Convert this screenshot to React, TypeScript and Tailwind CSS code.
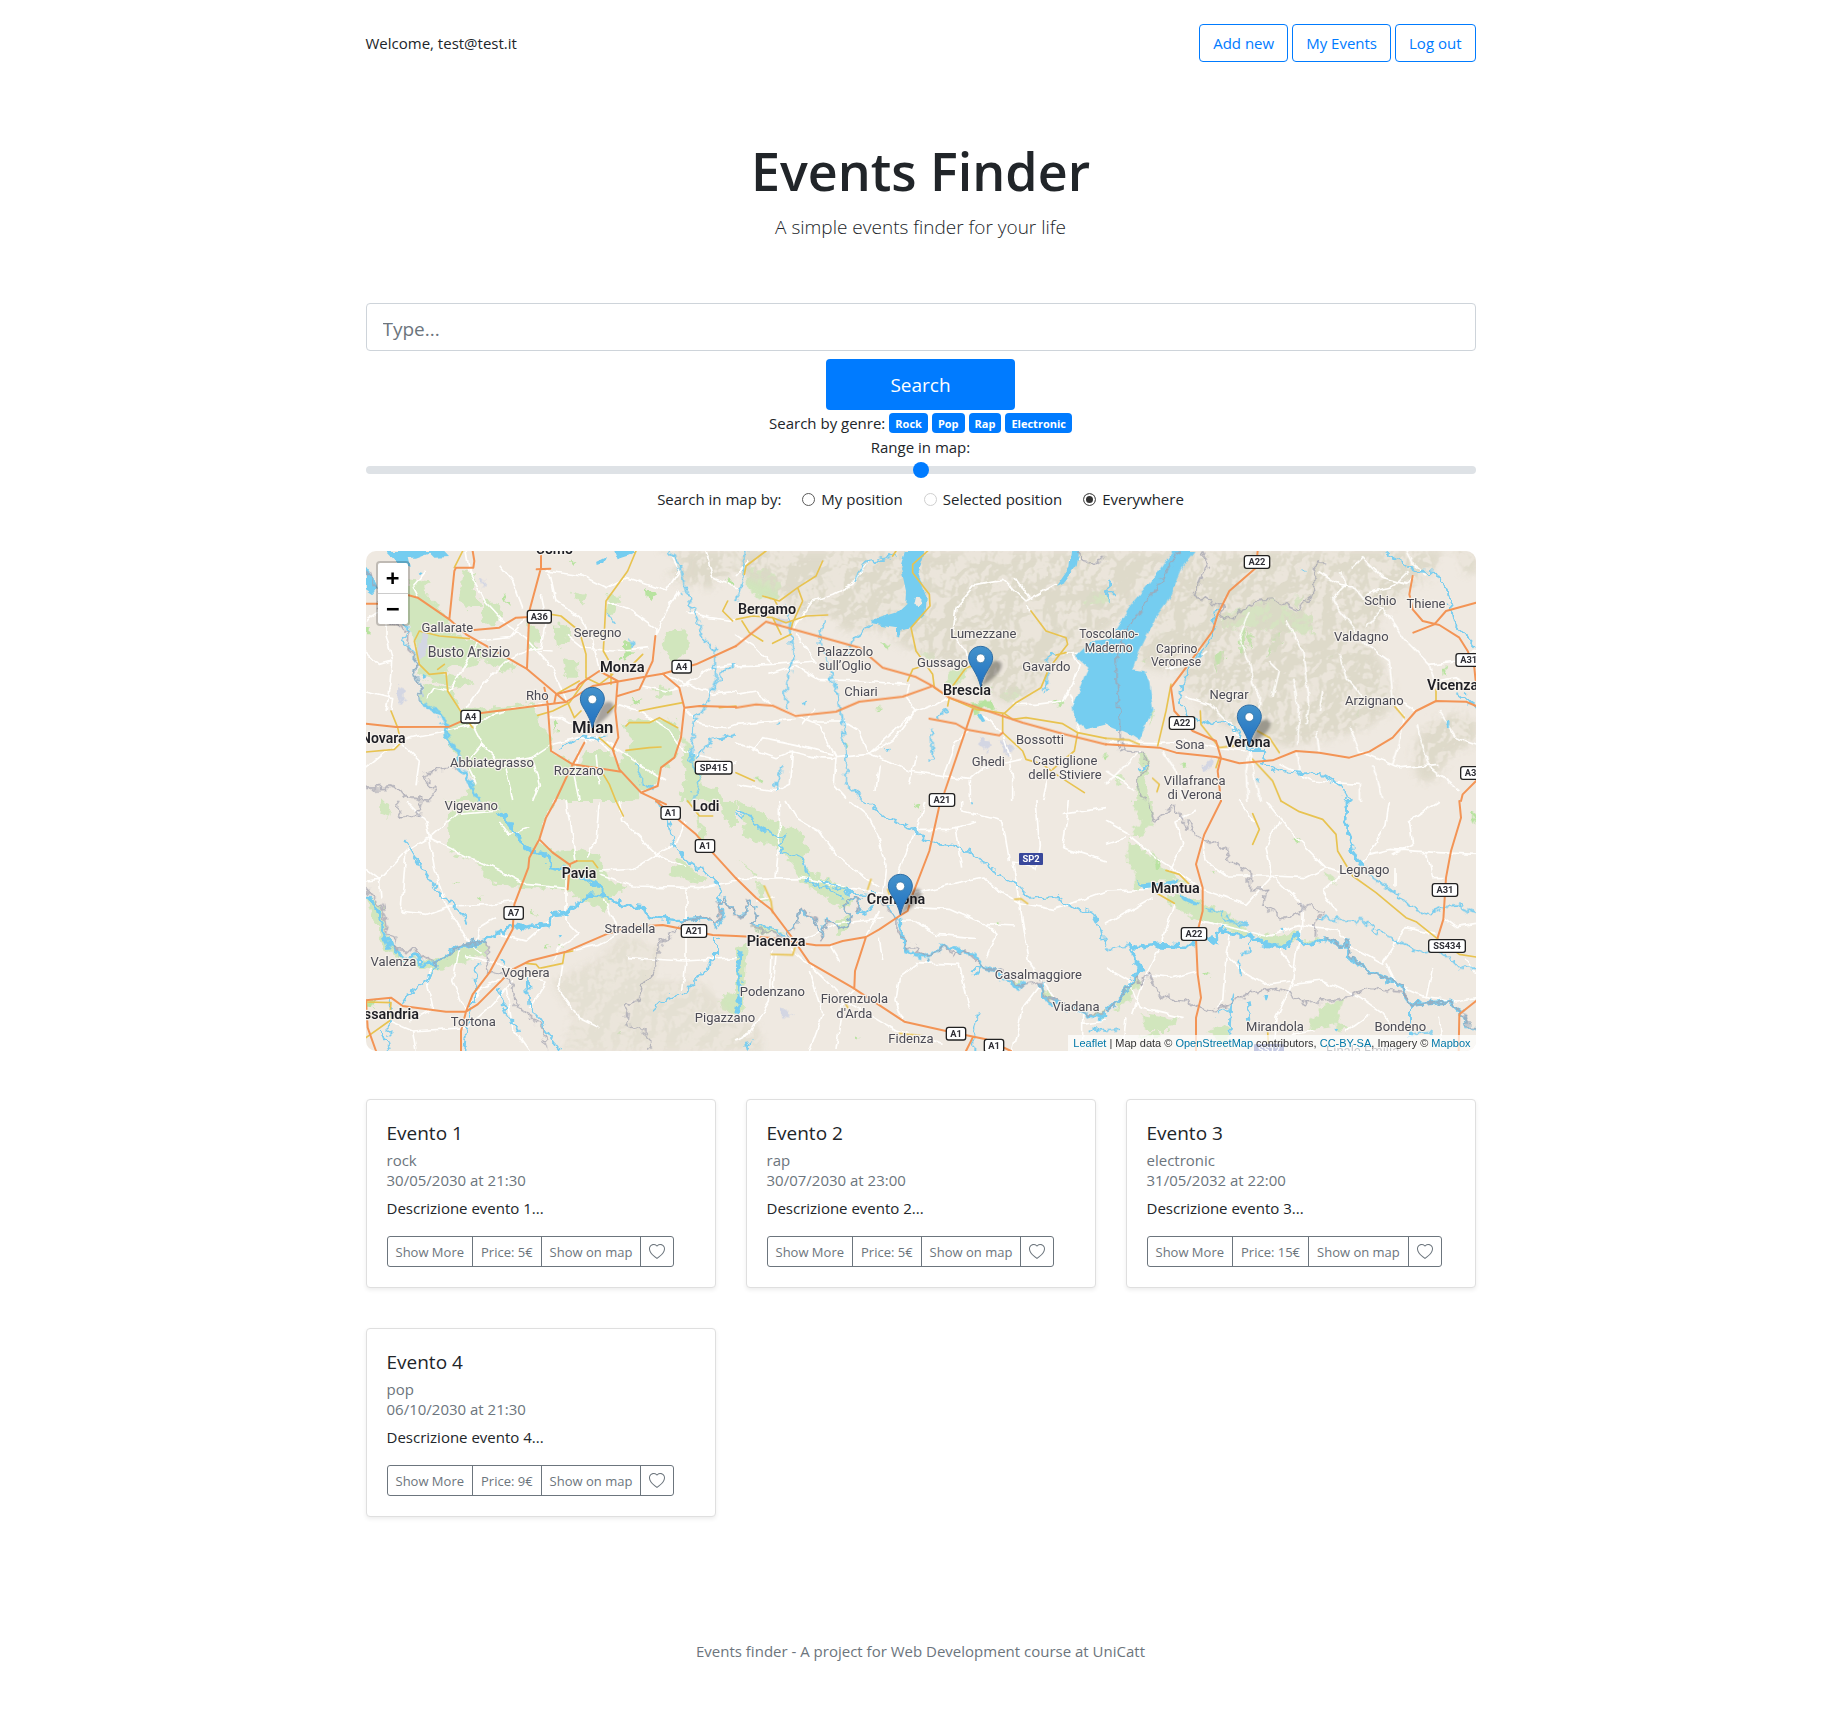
import React from "react";

type Tile = {
  x: number;
  y: number;
  green: string[];
  park: string[];
  lake: string[];
  river: string[];
  stream: string[];
  white: string[];
  yellow: string[];
  orange: string[];
  border: string[];
};

// The drawing is divided into six tiles of 1110 x 750 units, three units to a pixel.
const tiles: Tile[] = [
  {
    x: 0,
    y: 0,
    green: [
      "M125,85 L185,90 L170,120 L215,170 L250,205 L250,240 L310,270 L400,310 L460,350 L420,360 L350,330 L300,350 L250,340 L240,370 L300,380 L320,400 L260,410 L200,390 L160,370 L148,260 L112,200Z",
      "M170,400 L250,410 L290,480 L400,470 L500,455 L520,520 L560,560 L555,605 L640,640 L660,600 L730,600 L760,650 L800,560 L765,520 L790,505 L930,510 L945,560 L920,640 L880,660 L870,705 L825,725 L800,750 L230,750 L290,740 L330,690 L270,620 L240,560 L235,500 L165,460Z",
      "M290,60 L330,70 L320,110 L340,160 L300,175 L280,140Z",
      "M350,150 L400,160 L410,210 L370,230 L340,190Z",
      "M560,220 L610,225 L605,270 L570,290Z",
      "M590,320 L640,330 L635,380 L600,380Z",
      "M480,210 L520,240 L510,300 L485,290Z",
      "M900,240 L960,235 L970,290 L930,340 L890,300Z",
      "M960,560 L990,640 L1010,700 L1060,720 L1070,750 L940,750 L960,680 L945,620Z",
      "M730,120 L760,140 L740,200 L720,180Z",
      "M620,120 L660,130 L650,170Z",
      "M800,520 L830,540 L820,570 L790,560Z",
      "M860,410 L900,400 L920,430 L880,440Z",
    ],
    park: [
      "M775,270 L795,275 L798,320 L770,332Z",
      "M840,115 L870,125 L860,150 L842,140Z",
      "M410,120 L428,160 L415,150Z",
      "M610,35 L628,30 L622,45Z",
      "M560,515 L580,520 L570,540Z",
      "M800,440 L830,450 L800,460Z",
      "M0,235 L12,232 L10,250 L0,250Z",
      "M1080,85 L1100,90 L1095,105Z",
    ],
    lake: [
      "M0,50 L25,85 L35,110 L20,132 L0,118Z",
      "M60,0 L235,0 L252,18 L205,20 L190,5 L150,20 L125,20 L132,50 L100,42Z",
      "M745,0 L815,0 L785,15 L755,25Z",
      "M690,30 L720,15 L712,35 L692,42Z",
      "M155,62 L170,66 L160,75Z",
      "M168,370 L182,378 L172,384Z",
    ],
    river: ["M165,455 L225,490 L240,530 L250,570 L275,600 L280,650 L300,680 L320,715 L340,750"],
    stream: [
      "M108,215 L130,240 L100,270 L130,290 L150,310 L145,360 L160,400 L165,455",
      "M910,0 L945,50 L960,130 L985,180 L1010,260 L1045,300 L1050,380 L1030,450 L985,510 L975,620 L1000,690 L980,750",
      "M730,190 L745,215 M790,265 L800,290",
      "M580,590 L650,560 L720,560",
      "M810,640 L830,700 L860,715",
      "M985,620 L1040,570 L1110,550",
      "M1110,340 L1070,360 L1050,400",
    ],
    white: [
      "M0,210 L60,170 L60,250 L80,330 L75,400 L60,480 M0,300 L40,340 L75,330",
      "M300,0 L310,60 L355,150 L420,220 L480,260 L560,350 L600,453",
      "M525,130 L540,200 L525,290 L483,300 L420,330 L350,400 L300,470",
      "M540,60 L650,75 L720,110 L780,80 L900,120 L940,60 L920,20",
      "M550,60 L570,150 L640,200 L680,270 L700,360",
      "M720,150 L800,180 L870,230 L868,255 M868,255 L900,180 L940,120",
      "M830,405 L900,420 L970,400 L1040,430 L1110,420",
      "M890,368 L960,400 L1040,350 L1110,340",
      "M0,650 L60,600 L130,560 L240,540 L320,520 L350,580 L420,650 L440,750",
      "M105,575 L160,630 L150,700",
      "M320,530 L380,490 L460,470 L540,460",
      "M350,580 L300,640 L330,700",
      "M500,620 L560,580 L640,560 L700,570 L730,600",
      "M500,620 L380,640 M500,620 L520,700 L500,750",
      "M655,575 L670,520 L700,520 L710,560 L655,560 M640,530 L590,500 L545,500",
      "M640,600 L625,680 L640,750 M690,610 L700,700 M720,570 L820,640 L900,690",
      "M755,460 L820,480 L900,530 L950,600 L1110,640",
      "M955,470 L1000,520 L1080,530 L1110,520",
      "M480,200 L430,260 L340,270 L250,420 L200,410 L180,440",
      "M560,300 L500,295 M600,250 L650,290 L740,300 L850,290",
      "M0,420 L80,440 L75,480",
      "M960,180 L1030,200 L1110,210 M1020,0 L1040,80 L1110,110",
      "M400,40 L440,90 L470,170 M180,60 L140,110 L155,140",
    ],
    yellow: [
      "M160,240 L145,270 L160,340 L190,370 L240,365 L245,420 L290,490 L320,530 M215,355 L235,340",
      "M160,240 L220,255 L310,263",
      "M555,190 L585,195 L640,240 L660,310 L660,380 L700,400 L740,370",
      "M810,0 L785,60 L720,150 L712,300 L735,340 L735,400",
      "M515,493 L560,480 L610,455 L660,385",
      "M780,525 L790,515 L850,515 L880,500 L935,530",
      "M780,598 L850,590 L885,588",
      "M820,480 L870,470 L950,455",
      "M0,603 L85,595 L105,575 L95,530 L75,480",
      "M700,560 L745,600 M700,650 L730,700 L750,750",
      "M1100,210 L1070,180 L1085,150",
      "M725,485 L750,460 M605,455 L625,500 L645,480",
      "M800,340 L830,310 M265,50 L290,0",
      "M1060,470 L1110,465 M570,430 L640,390",
    ],
    orange: [
      "M0,158 L40,158",
      "M0,518 L90,528 L250,527 L340,487 L600,453 L680,405 L850,375 L890,368 L990,340 L1110,285",
      "M128,133 L155,140 L250,205 L300,250 L480,352 L600,453",
      "M250,205 L265,60 L270,50 L322,50 L325,30 L320,0",
      "M525,0 L525,50 L490,180 L483,352 M512,55 L553,53",
      "M290,240 L400,230 L450,200 L550,195",
      "M755,390 L748,480 L757,560 L740,595 L760,655 L825,725 L900,760",
      "M535,410 L545,460 L555,600 L620,640 L765,662",
      "M890,368 L940,410 L955,470 L945,560 L925,620 L885,650 L875,705 L825,725",
      "M955,470 L1000,465 L1110,468",
      "M655,575 L610,660 L568,750",
      "M868,255 L860,330 L820,415 L755,435",
      "M565,455 L570,430 L630,415 L640,400 L700,360 L755,390",
    ],
    border: [
      "M0,60 L35,115 L40,200 L100,225 L128,245 L120,290 L150,320 L145,360 L160,400 L165,455",
      "M0,712 L80,708 L130,740 L190,748 L210,720 L165,675 L220,655 L275,650",
    ],
  },
  {
    x: 1110,
    y: 0,
    green: [
      "M35,55 L100,55 L140,110 L120,145 L70,140 L35,110Z",
      "M620,400 L650,355 L700,340 L690,380 L650,410Z",
      "M1035,160 L1070,125 L1110,120 V170Z",
      "M790,430 L840,405 L860,430 L810,455Z",
      "M550,310 L600,305 L590,325Z",
    ],
    park: [
      "M700,455 L775,450 L770,470 L720,485 L740,505 L720,500Z",
      "M730,395 L765,410 L755,430Z",
      "M440,280 L458,282 L455,295Z",
      "M955,455 L975,452 L972,468Z",
      "M1090,615 L1110,610 V630Z",
      "M415,470 L430,468 L422,477Z",
      "M55,682 L75,680 L72,692Z",
      "M325,575 L335,580 L328,600Z",
    ],
    lake: [
      "M510,0 L495,50 L510,120 L508,160 L480,185 L420,203 L408,220 L455,228 L480,232 L480,258 L492,264 L497,235 L530,228 L568,190 L572,140 L545,60 L565,0Z",
      "M1005,0 L1000,50 L960,108 L985,95 L1022,45 L1030,0Z",
      "M722,490 L735,485 L748,508 L735,510Z",
      "M200,455 L210,452 L207,468Z",
      "M447,592 L458,590 L456,604Z",
    ],
    river: [],
    stream: [
      "M30,0 L15,100 L0,150",
      "M265,205 L250,260 L275,330 L300,420 L320,520 L330,640 L330,700 L385,750",
      "M150,160 L165,240 L170,330 L150,400 L150,475",
      "M355,100 L385,35 L440,25 L480,10",
      "M330,320 L350,265 L410,220",
      "M585,530 L590,620 L585,625",
      "M140,645 L125,680 L118,720",
      "M960,310 L935,325 L930,420",
      "M610,500 L630,470",
      "M125,515 L128,525",
    ],
    white: [
      "M0,250 L60,290 L110,340 L0,345 M110,340 L240,330 L180,250",
      "M0,430 L60,420 L120,470 L250,520 L300,620 L400,610 L540,480 L600,460 L640,440",
      "M300,620 L295,700 L330,740 M400,610 L370,540 L320,510 L235,510",
      "M400,610 L520,660 L700,685 L740,650 L860,625",
      "M0,520 L180,505 M0,575 L120,620 L170,600 L160,700 L120,720 L0,700",
      "M160,600 L240,620 L300,622",
      "M100,370 L180,345 L250,385 L370,390 L520,400 L510,440 L540,480",
      "M165,240 L230,150 L290,130 L350,100 L400,30",
      "M660,170 L720,100 L800,85 L870,150 L960,100 M875,165 L885,180",
      "M660,170 L650,250 L690,300 L700,350",
      "M540,480 L480,560 L400,610 M620,680 L660,570 L700,540 M540,610 L520,700",
      "M740,490 L800,550 L820,610 L830,680 L830,750",
      "M830,460 L900,460 L980,450 L1010,400 L1030,340 L1010,310",
      "M1025,545 L1030,500 L1000,430 M980,310 L1060,305",
      "M0,75 L40,30 M200,520 L240,470",
      "M840,80 L880,140 M1030,20 L1000,30",
      "M50,600 L80,560 L180,580 L290,610",
      "M430,640 L420,720 M700,690 L700,750 M940,660 L920,750",
    ],
    yellow: [
      "M90,0 L30,45 L25,70 M260,30 L240,75 L185,110 L130,150 L80,135",
      "M185,110 L200,150 L170,215 L165,235",
      "M0,205 L50,195 L110,200 L150,215 L210,195 L275,192",
      "M18,210 L40,245 L80,270 M110,200 L135,250 M110,277 L165,250",
      "M480,0 L470,15 M80,135 L115,145 L125,165",
      "M575,0 L530,40 L530,65 L580,130 L582,165 L525,230 L540,300 L590,370 L595,410 L640,440",
      "M515,390 L530,355 L560,345 M640,440 L635,465 M650,405 L690,350 L710,345",
      "M640,440 L720,475 L805,487 L840,455 L915,410 L940,350 L995,280 L990,260 L930,240 L885,180",
      "M805,487 L830,505 L870,500 L980,518 L1025,545 L1110,562",
      "M800,490 L800,545 L860,600 L870,625 L920,640 L960,670 L1045,725",
      "M1025,545 L1015,600 L950,655 M960,312 L990,305",
      "M0,665 L55,690",
    ],
    orange: [
      "M0,285 L90,212 L370,290 L440,350 L540,378 L590,405 L640,440 L740,475 L860,515 L980,548 L1110,580",
      "M0,470 L60,460 L110,464 L180,495 L300,482 L370,452 L500,437 L590,405",
      "M580,503 L660,518 L690,535 L790,553 L800,545",
      "M710,475 L690,535 L625,725",
    ],
    border: ["M1030,0 L1040,30 L1075,35 L1110,15"],
  },
  {
    x: 2220,
    y: 0,
    green: [
      "M335,215 L350,190 L430,165 L500,140 L560,180 L615,185 L625,250 L540,240 L440,230 L400,230 L350,238Z",
      "M560,140 L590,135 L580,175Z",
      "M90,605 L125,610 L125,650 L120,700 L125,750 L95,750 L90,700 L110,650Z",
      "M25,675 L45,672 L48,695 L28,698Z",
      "M130,480 L148,485 L135,520Z",
      "M0,100 L12,110 L8,150 L0,150Z",
    ],
    park: [
      "M330,300 L355,295 L350,330 L325,365Z",
      "M400,245 L415,240 L420,310 L405,320Z",
      "M420,240 L440,250 L430,300Z",
      "M480,320 L500,260 L535,235 L510,300Z",
      "M655,325 L685,315 L680,328Z",
      "M220,635 L243,640 L238,650Z",
      "M750,485 L760,480 L755,495Z",
      "M1012,350 L1022,352 L1018,375Z",
      "M105,335 L130,318 L120,335Z",
    ],
    lake: [
      "M200,0 L160,60 L70,170 L10,265 L-45,270 L-90,315 L-50,350 L-100,470 L-95,500 L-60,535 L0,520 L60,545 L98,570 L110,540 L142,480 L130,395 L115,360 L80,355 L100,300 L150,200 L180,160 L230,50 L268,0Z",
      "M1023,512 L1033,512 L1032,535 L1024,534Z",
      "M583,58 L602,60 L598,66Z",
      "M452,682 L462,684 L460,700Z",
    ],
    river: [],
    stream: [
      "M335,170 L320,240 L300,290 L240,360 L220,440 L240,490 L300,520 L360,512 L395,540 L430,600 L475,600 L470,635 L520,660 L640,670 L700,700 L730,750",
      "M840,0 L860,20 L930,60 L990,65 L1025,120 L1040,210 L1110,285",
      "M1050,420 L1110,470",
      "M0,130 L30,130 M10,90 L5,150",
      "M125,645 L100,660",
    ],
    white: [
      "M700,60 L720,100 L680,140 L700,180 L780,280 L850,330 L860,440 L895,500",
      "M635,60 L700,100 L740,105 L770,140 L830,170 L900,270 L970,340 L990,410",
      "M780,230 L830,170 M740,50 L770,20 L830,80 L900,100 L920,75",
      "M895,500 L880,580 L860,640 M860,440 L930,480",
      "M900,0 L920,40 L960,70 M780,130 L860,110 L910,60",
      "M970,340 L1050,330 L1110,300 M990,390 L1050,380 L1085,400",
      "M430,180 L400,260 L430,330 L440,400 L460,440 L450,520",
      "M540,210 L590,300 L600,380 L610,450 L600,520",
      "M700,310 L720,380 L800,470 M560,380 L580,480 L575,580",
      "M240,440 L310,460 L380,530 L430,600 L460,750",
      "M80,355 L130,390 M180,350 L250,340 L300,300",
      "M0,572 L150,575 L240,570 L340,590 L420,600",
      "M170,600 L210,660 L230,750 M430,600 L420,660 L425,750",
      "M520,640 L620,690 L760,700 L760,750 M570,600 L580,660",
      "M730,530 L760,600 L880,650 L1000,640 M1000,480 L1050,560 L1110,580",
      "M630,540 L640,600 M0,700 L60,640 L100,600 M0,660 L90,720",
      "M500,440 L520,360 L490,330 M640,480 L650,420",
      "M930,520 L970,650 L1060,720 M800,640 L830,740",
    ],
    yellow: [
      "M0,562 L70,567 L100,580 M195,400 L180,480 L155,585",
      "M283,480 L285,520 L340,590 L400,582 M340,620 L330,650",
      "M455,540 L490,560 L520,605 M440,625 L500,690 L525,750",
      "M140,682 L160,700 L153,722 M865,465 L895,500 M990,415 L990,450",
    ],
    orange: [
      "M455,0 L450,50 L370,120 L335,190 L320,240 L240,350 L195,410 L205,480 L260,540 L330,570 L345,620 L335,660 L345,750",
      "M0,580 L160,590 L210,605 L330,618 L400,637 L500,628 L570,600 L640,605 L730,620 L790,602 L860,560 L930,480 L990,450 L1080,452 L1110,465",
      "M920,75 L910,130 L920,175 L950,210 L1000,222 L1060,260 L1085,300 L1105,350 L1110,400",
      "M922,245 L985,220 L1020,180 L1110,155",
      "M1110,690 L1070,730 L1065,750",
    ],
    border: [
      "M290,0 L305,40 L265,135 L350,165 L345,200 L380,205 L400,180 L450,150 L500,145 L580,180 L625,120 L630,30 L660,30",
      "M220,0 L170,80 L60,240 L30,320 L45,600 L110,605 L125,650 L90,690 L110,750",
    ],
  },
  {
    x: 0,
    y: 750,
    green: [
      "M248,30 L400,0 L460,0 L480,80 L560,150 L640,145 L700,160 L720,230 L785,260 L730,285 L720,330 L650,300 L600,265 L480,262 L380,250 L345,225 L350,195 L330,180 L245,150Z",
      "M400,0 L568,0 L535,50 L515,110 L450,70Z",
      "M910,220 L940,170 L1020,230 L1010,250Z",
      "M1060,0 L1110,0 V85 L1080,60Z",
      "M0,290 L40,300 L80,450 L130,470 L200,480 L260,450 L360,425 L360,460 L200,515 L110,480 L60,450 L20,350Z",
      "M985,0 L1000,60 L1020,90 L1015,140 L1000,120Z",
      "M1060,590 L1110,570 V640 L1070,630Z",
      "M45,0 L75,15 L65,50 L40,40Z",
    ],
    park: [
      "M540,440 L555,430 L550,445Z",
      "M335,290 L352,285 L348,300Z",
      "M575,430 L590,428 L588,440Z",
      "M500,330 L510,332 L508,345Z",
      "M0,600 L30,595 L20,620 L0,620Z",
      "M750,700 L765,692 L760,706Z",
      "M262,243 L276,241 L272,250Z",
    ],
    lake: ["M402,475 L415,473 L413,486Z", "M578,400 L588,402 L582,412Z"],
    river: [
      "M0,280 L35,320 L45,360 L70,435 L110,470 L160,465 L160,490 L210,490 L270,440 L360,420 L430,375 L475,380 L545,370 L550,345 L600,340 L670,282 L720,285 L770,312 L830,320 L845,347 L940,360 L1025,350",
      "M400,30 L435,75 L460,120 L500,150 L550,170 L555,200 L610,210 L690,250 L720,285",
    ],
    stream: [
      "M870,0 L905,50 L925,140 L970,180 L1040,230 L1065,270 L1060,310",
      "M1025,350 L1050,380 L1072,350 L1058,310 L1075,298 L1110,345",
      "M118,120 L160,190 L215,270 L290,340 L300,370",
      "M210,500 L180,540 L135,570 L110,610",
      "M335,480 L325,580 L300,690 L295,750",
      "M485,530 L490,610 L540,690 L580,745",
      "M1050,410 L1050,470 L960,570 L890,600 L860,630",
      "M400,560 L420,630 L460,690",
      "M50,690 L70,750 M75,600 L70,700",
    ],
    white: [
      "M190,110 L120,150 L40,235 L0,240 M190,110 L180,60 L120,0 M190,110 L270,40 L400,30",
      "M190,110 L205,200 L240,310 L310,430 L350,460 M190,110 L310,170 L400,210 L480,250 L600,262",
      "M120,150 L105,330 M0,205 L40,235 L45,290",
      "M105,330 L180,340 L250,315 L380,310 L445,300",
      "M600,200 L600,360 L640,400 L580,440 L560,480",
      "M630,180 L600,0 M700,0 L690,120 L660,170",
      "M700,210 L800,205 L870,160 L930,130 L960,60 M870,160 L770,60 L760,0",
      "M700,220 L800,255 L1000,260 L1110,240 M870,160 L960,200 M960,260 L960,360",
      "M715,290 L750,380 M300,630 L260,540 L280,450",
      "M130,660 L200,620 L180,530 L200,500 M140,690 L300,680 L370,620 L440,540",
      "M960,380 L960,480 L950,570 M780,470 L960,480 L1110,470",
      "M440,500 L360,480 L300,470 M590,490 L580,570 L640,650 L700,680",
      "M400,400 L480,420 L560,350 M620,450 L700,430 L760,400",
      "M300,630 L350,560 L430,520 L540,540 L490,620",
      "M70,660 L140,690 L150,750 M420,560 L440,680 L490,750",
      "M490,80 L430,100 L400,60 M390,350 L340,380 L330,430",
    ],
    yellow: [
      "M632,180 L680,180 L695,200 M480,487 L510,490 L520,502 L590,487 L595,455 L620,450",
      "M0,603 L75,605 L70,660 L0,710 M750,0 L772,45 M965,0 L1000,45 L1040,45",
    ],
    orange: [
      "M568,0 L540,50 L520,115 L490,170 L487,200 L445,310 L440,385 L370,515 L320,580 L300,632 L285,690 L285,750",
      "M870,0 L990,100 L1110,232",
      "M1110,405 L1040,402 L940,382 L890,372 L790,378 L720,400 L600,452 L490,480 L440,505 L335,610 L300,632 L240,632 L110,615 L75,590 L0,598",
      "M520,115 L560,155 L610,190 L632,180 M612,190 L605,265",
      "M0,598 L5,680 L30,750",
    ],
    border: [
      "M0,265 L45,310 L55,350 L70,400 L90,410 L80,445 L150,450 L210,490 L280,435 L360,420",
      "M360,420 L370,510 L430,530 L450,610 L530,680 L545,750",
      "M940,378 L880,430 L870,500 L830,550 L820,600 L785,610 L780,670 L850,700 L852,750",
      "M95,0 L105,50 L155,40 L165,0",
      "M940,365 L1025,345 L1045,375 L1068,352 L1055,310 L1072,298 L1110,345",
    ],
  },
  {
    x: 1110,
    y: 750,
    green: [
      "M0,0 L60,30 L200,100 L215,140 L200,200 L330,262 L350,300 L320,325 L210,250 L150,170 L130,140 L60,120 L20,100 L25,70Z",
      "M300,360 L340,340 L335,390 L305,405Z",
      "M50,380 L100,375 L150,400 L100,400Z",
      "M0,440 L40,425 L30,480 L20,630 L0,635Z",
      "M0,175 L60,220 L70,300 L100,310 L60,230Z",
      "M820,540 L860,540 L845,562Z",
      "M915,545 L950,595 L925,600Z",
      "M1070,635 L1110,630 V648 L1080,648Z",
    ],
    park: [
      "M535,5 L553,15 L548,30Z",
      "M782,372 L798,368 L790,378Z",
      "M358,705 L370,702 L365,718Z",
      "M925,285 L940,283 L935,297Z",
    ],
    lake: ["M700,0 L710,2 L705,8Z"],
    river: [
      "M12,450 L5,500 L15,560 L0,640",
      "M490,355 L500,420 L510,450 L540,462 L570,470 L625,435 L650,440 L680,455 L715,462 L740,500 L780,510 L800,530 L845,558 L870,545 M915,545 L925,595 L1000,620 L1080,648 L1110,640",
    ],
    stream: [
      "M0,345 L30,338 L40,300 L62,320 L50,372 L110,380 L150,410 L180,370 L190,330 L240,355 L255,410 L270,355 L320,385 L345,350 L318,315 L350,290 L375,295 L365,340 L395,330 L430,290 L455,310 L485,350",
      "M385,0 L450,50 L530,80 L570,122 L650,130 L700,155 L780,210 L850,260 L880,290 L960,285 L1010,320 L1070,335 L1095,380 L1110,440",
      "M0,30 L45,45 L60,70 L120,110 L150,100 L130,150 L200,170 L215,240 L270,260 L320,290",
      "M250,235 L340,275 L420,280",
      "M725,640 L715,700 L715,750",
      "M705,510 L735,500 L715,530",
      "M1055,685 L1110,690 M25,745 L45,720",
      "M0,40 L20,50",
    ],
    white: [
      "M0,232 L200,230 L350,265 L440,280 L450,190 L430,110 L400,50 L340,0",
      "M150,0 L180,50 L250,90 L300,160 L350,200 L430,260 M130,0 L130,100 L120,230",
      "M470,270 L500,180 L540,85 L570,0 M540,85 L640,85 L720,60",
      "M530,280 L640,250 L740,228 L790,270 L850,305 L950,325 L1000,310",
      "M850,305 L880,480 L920,540 M850,305 L830,180 L900,200 L910,130 L900,0",
      "M535,320 L640,325 L740,370 L840,375 M480,360 L540,360 L600,400 L720,410",
      "M440,350 L300,370 L180,420 M390,408 L430,330",
      "M165,440 L260,530 L330,600 L480,690 L620,730",
      "M105,450 L100,600 L40,700 L0,720 M120,460 L110,580",
      "M540,485 L670,490 L700,620 M545,490 L490,530 L480,600 L500,660",
      "M355,560 L320,600 L300,750 M220,510 L260,640 L220,750",
      "M920,540 L860,620 L830,750 M920,540 L960,600 L1040,640 L1040,750 M1040,670 L1110,660",
      "M680,0 L680,30 L800,60 L820,180 M980,40 L1110,20 M1000,0 L980,140 L1110,180",
      "M1000,310 L1110,270 M430,410 L440,480 M750,470 L780,400 L750,370",
      "M60,300 L120,290 M280,430 L310,480 M680,200 L660,80",
    ],
    yellow: [
      "M85,255 L105,300 L110,335 M105,460 L170,462 L180,430 M405,235 L395,265",
      "M835,295 L855,293 L875,308 M455,265 L460,280 M330,610 L335,620 M490,697 L560,705",
    ],
    orange: [
      "M610,15 L580,150 L530,280 L515,330 L490,345 L430,385 L390,408 L320,420 L280,433 L240,433 L190,425 L100,410 L0,405",
      "M0,232 L60,290 L105,325 L165,405 L220,485 L350,560 L505,662 L640,692 L750,715 L825,750",
      "M390,408 L370,470 L357,510 L355,560 M710,710 L690,750",
    ],
    border: [
      "M0,348 L28,340 L38,300 L60,322 L50,375 L150,412 L180,375 L190,328 L240,350 L255,420 L270,360 L320,385 L345,352 L318,312 L350,288 L372,292 L365,330",
      "M440,300 L480,350 L480,390 L505,410 L510,445 L545,430 L545,455 L570,470 L630,435 L655,465 L690,450 L750,505 L790,510 L850,555 L910,540 L930,590 L1000,615 L1060,640 L1110,635",
    ],
  },
  {
    x: 2220,
    y: 750,
    green: [
      "M82,0 L140,0 L138,80 L100,108 L75,108 L100,60Z",
      "M68,115 L130,155 L185,210 L240,245 L150,240 L100,268 L85,265 L85,210 L66,180Z",
      "M185,285 L240,285 L300,310 L380,345 L440,400 L400,402 L340,370 L280,358 L190,305Z",
      "M450,402 L510,405 L575,390 L575,415 L540,432 L480,425Z",
      "M590,420 L640,410 L610,430Z",
      "M640,620 L715,590 L690,670 L610,682Z",
      "M110,640 L215,655 L190,690 L115,690Z",
      "M300,690 L370,670 L360,750 L320,700Z",
      "M85,530 L105,540 L60,610 L20,632 L50,570Z",
      "M690,660 L730,680 L700,695Z",
      "M150,690 L170,700 L90,715Z",
      "M655,205 L680,225 L692,255 L665,235Z",
    ],
    park: [
      "M140,185 L170,180 L165,205 L145,203Z",
      "M560,115 L572,108 L583,122 L578,130Z",
      "M315,212 L325,210 L322,225Z",
      "M288,520 L312,518 L300,530Z",
      "M1095,40 L1110,32 V70Z",
    ],
    lake: [
      "M90,232 L105,250 L170,245 L215,235 L205,255 L110,265Z",
      "M220,275 L245,290 L285,310 L260,310 L228,295Z",
      "M523,385 L533,383 L530,395Z",
      "M475,582 L487,582 L480,600Z",
      "M685,683 L697,685 L690,692Z",
    ],
    river: [
      "M70,430 L95,440 L150,430 L250,437 L270,430 M300,405 L330,430 L332,395 L350,383 L375,398 L430,405 L480,430 L540,436 L570,400 L600,435 L655,413",
      "M655,413 L710,437 L725,420 L728,470 L790,510 L890,555 L905,610 L1030,600 L1070,640",
      "M0,630 L60,570 L105,500 L85,480 L75,430",
      "M725,0 L720,80 L740,150 L765,190",
    ],
    stream: [
      "M0,450 L30,440 L70,430",
      "M765,190 L800,230 L870,275 L910,315 L970,342 L1010,318 L1060,315 L1110,335",
      "M640,352 L770,360 L830,400 L960,460 L1010,450 L1060,500 L1110,505",
      "M300,325 L340,330 L355,360 L420,365 L400,375 L360,340",
      "M430,410 L435,450 L400,460 M400,480 L405,530",
      "M375,620 L370,700 M425,600 L430,670",
      "M915,610 L915,700 L980,695",
      "M385,575 L375,620 L330,640 M0,690 L40,685",
      "M1070,640 L1080,675 L1110,675",
    ],
    white: [
      "M480,0 L520,50 L580,120 L660,200 L740,220 M660,200 L600,230 L500,225 L360,225",
      "M500,225 L480,140 L520,60 M500,225 L590,310 L585,400 L570,460 L560,540 L510,650 L500,750",
      "M75,108 L150,170 L290,265 M290,265 L420,310 L500,225",
      "M190,208 L230,130 L210,60 L270,30 M360,225 L300,180 L290,110",
      "M0,270 L130,265 M0,370 L140,290 M205,305 L170,420 L120,520 L80,640",
      "M280,358 L400,385 L480,405 L590,370 L700,390 L740,440 L830,490 L900,380 L990,400",
      "M850,0 L840,70 L790,160 L765,190 M790,160 L850,145 L1000,155 L1110,160",
      "M870,200 L870,260 M860,160 L920,130 L910,60 L1000,0",
      "M840,490 L870,550 L950,585 L1050,600 L1110,590",
      "M370,400 L360,460 L420,520 L470,550 L560,540 M560,550 L650,540 L760,590 L830,640 L870,690",
      "M360,470 L350,600 L330,620 M120,520 L200,530 L275,510",
      "M0,500 L70,540 L100,620 L230,650 M60,650 L50,750",
      "M1010,350 L1050,380 L1110,370 M960,150 L980,230 L1015,230",
      "M700,225 L650,270 L690,330 M520,440 L560,500",
      "M980,500 L960,590 M1080,470 L1110,520 M1000,650 L1010,750",
      "M560,700 L620,690 M720,690 L790,640",
      "M0,130 L60,110 M0,60 L70,100 M400,0 L440,60",
    ],
    yellow: [
      "M525,0 L580,32 L650,55 L690,100 L695,150 L740,225 L810,275 L900,350 L930,362 L990,410 L1060,460 L1110,468",
      "M440,38 L460,85 L440,130 M180,208 L220,220 L255,255 M150,275 L205,307 M485,690 L488,750",
    ],
    orange: [
      "M345,0 L295,100 L270,190 L290,260 L290,330 L270,410 L275,520 L285,590 L270,650 L270,750",
      "M1060,0 L1065,50 L1035,150 L1020,230 L1012,355 L995,410",
      "M1110,600 L1060,640 L1058,750",
    ],
    border: [
      "M120,0 L145,60 L200,15 L270,105 L360,140 L370,180 L430,210 L430,270 L485,265 L470,310 L530,350 L580,340 L590,310 L655,335 L630,365 L628,410",
      "M0,632 L60,570 L95,525 L100,555 L130,515 L155,580 L250,605 L320,635 L430,575 L510,562 L600,605 L730,590 L770,562 L900,575 L905,610",
      "M655,410 L708,437 L725,418 L732,470 L790,512 L890,552 L905,612 L1030,600 L1072,640 L1080,672 L1110,675",
    ],
  },
];

const hills = [
  "M880,0 L960,40 L900,70 L960,100 L1040,110 L1110,60 L1250,130 L1300,190 L1380,190 L1440,240 L1530,230 L1640,300 L1710,330 L1810,340 L1840,400 L1920,455 L1980,430 L2040,380 L2070,330 L2140,300 L2230,230 L2290,170 L2430,0Z",
  "M2460,0 L2400,120 L2350,200 L2300,340 L2360,350 L2450,370 L2470,440 L2520,500 L2640,540 L2780,590 L2860,570 L3000,530 L3070,480 L3080,400 L3010,270 L3080,160 L3130,110 L3200,80 L3230,0Z",
  "M3260,0 L3330,0 V70 L3290,60Z",
  "M3140,600 L3180,520 L3260,490 L3330,500 V570 L3250,620 L3200,690 L3160,690Z",
  "M560,1290 L690,1230 L770,1150 L880,1190 L860,1290 L1000,1290 L1110,1400 L1180,1430 L1190,1500 L590,1500 L620,1400Z",
];

const urban = [
  "M160,250 L185,245 L188,310 L155,315Z",
  "M95,405 L120,415 L118,445 L98,455Z",
  "M345,85 L355,88 L350,115Z",
  "M1220,200 L1260,205 L1270,220 L1230,222Z",
  "M1840,560 L1875,565 L1880,590 L1865,602 L1840,585Z",
  "M1905,570 L1930,580 L1945,605 L1930,612 L1905,590Z",
  "M2510,640 L2545,620 L2540,645 L2510,662Z",
  "M1240,1370 L1280,1385 L1270,1400 L1245,1395Z",
  "M2560,515 L2590,512 L2575,528Z",
];

type Label = [number, number, string, number?, boolean?];
const labels: Label[] = [
  [565, 8, "Como", 42, true],
  [244, 242, "Gallarate"],
  [309, 318, "Busto Arsizio", 42],
  [695, 257, "Seregno"],
  [769, 363, "Monza", 44, true],
  [514, 446, "Rho"],
  [680, 545, "Milan", 50, true],
  [52, 577, "Novara", 42, true],
  [378, 649, "Abbiategrasso"],
  [638, 673, "Rozzano"],
  [316, 778, "Vigevano"],
  [1203, 190, "Bergamo", 43, true],
  [1852, 261, "Lumezzane"],
  [1437, 315, "Palazzolo"],
  [1437, 358, "sull’Oglio"],
  [1730, 347, "Gussago"],
  [2041, 359, "Gavardo"],
  [1485, 434, "Chiari"],
  [1803, 431, "Brescia", 43, true],
  [2022, 578, "Bossotti"],
  [1867, 645, "Ghedi"],
  [2097, 641, "Castiglione"],
  [2097, 685, "delle Stiviere"],
  [2228, 261, "Toscolano-", 36],
  [2228, 302, "Maderno", 36],
  [2432, 305, "Caprino", 36],
  [2430, 345, "Veronese", 36],
  [3043, 162, "Schio"],
  [3180, 170, "Thiene"],
  [2986, 270, "Valdagno"],
  [2589, 445, "Negrar"],
  [3260, 416, "Vicenza", 43, true],
  [3025, 461, "Arzignano"],
  [2645, 588, "Verona", 43, true],
  [2472, 595, "Sona"],
  [2486, 702, "Villafranca"],
  [2486, 744, "di Verona"],
  [1020, 781, "Lodi", 42, true],
  [639, 980, "Pavia", 42, true],
  [792, 1147, "Stradella"],
  [82, 1245, "Valenza"],
  [479, 1278, "Voghera"],
  [76, 1403, "ssandria", 43, true],
  [322, 1426, "Tortona"],
  [1077, 1413, "Pigazzano"],
  [1230, 1185, "Piacenza", 43, true],
  [1590, 1060, "Cremona", 43, true],
  [1219, 1334, "Podenzano"],
  [1465, 1355, "Fiorenzuola"],
  [1465, 1400, "d'Arda"],
  [1635, 1477, "Fidenza"],
  [2017, 1285, "Casalmaggiore"],
  [2130, 1379, "Viadana"],
  [2428, 1026, "Mantua", 43, true],
  [2995, 969, "Legnago"],
  [2727, 1441, "Mirandola"],
  [3103, 1441, "Bondeno"],
  [2990, 1513, "Finale Emilia"],
];

type Shield = [number, number, string, number];
const shields: Shield[] = [
  [520, 197, "A36", 72],
  [947, 347, "A4", 58],
  [314, 497, "A4", 58],
  [1043, 650, "SP415", 110],
  [2673, 33, "A22", 76],
  [3308, 327, "A31", 76],
  [2448, 516, "A22", 76],
  [3322, 666, "A31", 76],
  [914, 786, "A1", 58],
  [1017, 885, "A1", 58],
  [1728, 747, "A21", 76],
  [443, 1086, "A7", 58],
  [984, 1140, "A21", 76],
  [1770, 1448, "A1", 58],
  [1884, 1484, "A1", 58],
  [2484, 1149, "A22", 76],
  [3237, 1017, "A31", 76],
  [3243, 1185, "SS434", 110],
];

const pins: [number, number, string][] = [
  [679, 531, "Evento 1"],
  [1844, 408, "Evento 2"],
  [2650, 584, "Evento 3"],
  [1603, 1092, "Evento 4"],
];

function Layer({ k, ...props }: { k: Exclude<keyof Tile, "x" | "y"> } & React.SVGProps<SVGGElement>) {
  return (
    <g {...props}>
      {tiles.map((t) => (
        <path key={`${t.x}-${t.y}`} transform={`translate(${t.x} ${t.y})`} d={t[k].join(" ")} />
      ))}
    </g>
  );
}

function MapDrawing() {
  return (
    <svg viewBox="0 0 3330 1500" preserveAspectRatio="xMidYMid slice" className="block h-[500px] w-full" role="img" aria-label="Map of events">
      <defs>
        <filter id="relief" x="0" y="0" width="3330" height="1500" filterUnits="userSpaceOnUse">
          <feTurbulence type="fractalNoise" baseFrequency="0.011 0.009" numOctaves="4" seed="8" result="n" />
          <feDiffuseLighting in="n" surfaceScale="80" diffuseConstant="1.05" lightingColor="#ffffff" result="l">
            <feDistantLight azimuth="225" elevation="52" />
          </feDiffuseLighting>
          <feColorMatrix
            in="l"
            type="matrix"
            values="0 0 0 0 0.71  0 0 0 0 0.68  0 0 0 0 0.57  -2.6 0 0 0 2.3"
            result="shade"
          />
          <feGaussianBlur in="SourceAlpha" stdDeviation="14" result="mask" />
          <feComposite in="shade" in2="mask" operator="in" />
        </filter>
        <filter id="rough" x="0" y="0" width="3330" height="1500" filterUnits="userSpaceOnUse">
          <feTurbulence type="fractalNoise" baseFrequency="0.045" numOctaves="2" seed="3" />
          <feDisplacementMap in="SourceGraphic" scale="34" xChannelSelector="R" yChannelSelector="G" />
        </filter>
        <filter id="fine" x="0" y="0" width="3330" height="1500" filterUnits="userSpaceOnUse">
          <feTurbulence type="fractalNoise" baseFrequency="0.03" numOctaves="2" seed="5" />
          <feDisplacementMap in="SourceGraphic" scale="18" xChannelSelector="R" yChannelSelector="G" />
        </filter>
        <filter id="soft" x="-50%" y="-50%" width="200%" height="200%">
          <feGaussianBlur stdDeviation="5" />
        </filter>
        <linearGradient id="pinFill" x1="0" y1="0" x2="0" y2="1">
          <stop offset="0" stopColor="#4492cb" />
          <stop offset="1" stopColor="#1f70c1" />
        </linearGradient>
      </defs>
      <rect width="3330" height="1500" fill="#efe9e1" />
      <g filter="url(#rough)">
        <Layer k="green" fill="#d1e6bd" />
        <path d="M600,450 L680,420 L750,460 L745,560 L720,600 L640,590 L570,560 L560,480Z" fill="#efe9e1" />
        <Layer k="park" fill="#b8e3a0" />
        <path d={urban.join(" ")} fill="#d3d6e3" />
      </g>
      <path d={hills.join(" ")} fill="#e2dccd" opacity="0.3" filter="url(#soft)" />
      <path d={hills.slice(0, 4).join(" ")} fill="#000" opacity="0.85" filter="url(#relief)" />
      <path d={hills[4]} fill="#000" opacity="0.4" filter="url(#relief)" />
      <g filter="url(#fine)" fill="none" strokeLinejoin="round">
        <Layer k="white" stroke="#fffefc" strokeWidth="5" />
        <Layer k="lake" fill="#75cdf0" />
        <path d="M1650,140 L1664,142 L1662,168 L1645,165Z" fill="#efe9e1" />
      </g>
      <g filter="url(#rough)" fill="none" strokeLinejoin="round">
        <Layer k="stream" stroke="#79cdef" strokeWidth="6" />
        <Layer k="river" stroke="#75cdf0" strokeWidth="11" />
        <Layer k="border" stroke="#a3a3b0" strokeWidth="4" />
      </g>
      <g fill="none" strokeLinejoin="round" strokeLinecap="round">
        <Layer k="yellow" stroke="#e8c350" strokeWidth="5" />
        <Layer k="orange" stroke="#f39455" strokeWidth="6" />
      </g>
      <g fontFamily="Roboto, sans-serif" textAnchor="middle" stroke="#f6f2ec" strokeWidth="7" strokeLinejoin="round" paintOrder="stroke">
        {labels.map(([x, y, text, size = 39, major]) => (
          <text key={text} x={x} y={y} fontSize={size} fontWeight={major ? 600 : 400} fill={major ? "#1f1f25" : "#4b4b55"}>
            {text}
          </text>
        ))}
      </g>
      <g fontFamily="Roboto, sans-serif" fontWeight="700" fontSize="28" textAnchor="middle">
        {shields.map(([x, y, text, w]) => (
          <g key={`${x}-${y}`}>
            <rect x={x - w / 2} y={y - 19} width={w} height="38" rx="7" fill="#fff" stroke="#222" strokeWidth="4" />
            <text x={x} y={y + 10} fill="#2f2f36">
              {text}
            </text>
          </g>
        ))}
        <rect x="1959" y="906" width="72" height="36" rx="3" fill="#39489b" />
        <text x="1995" y="934" fill="#fff">
          SP2
        </text>
        <rect x="2664" y="1479" width="90" height="36" rx="3" fill="#39489b" />
        <text x="2709" y="1507" fill="#fff">
          SS12
        </text>
      </g>
      {pins.map(([x, y, title]) => (
        <g key={title} transform={`translate(${x} ${y})`}>
          <title>{title}</title>
          <path d="M0,0 L26,-66 C40,-84 62,-82 64,-66 C64,-46 30,-18 0,0Z" fill="#000" opacity="0.3" filter="url(#soft)" />
          <path
            d="M0,0 C-5,-22 -12,-36 -24,-56 C-31,-67 -36,-76 -36,-87 C-36,-107 -20,-122 0,-122 C20,-122 36,-107 36,-87 C36,-76 31,-67 24,-56 C12,-36 5,-22 0,0Z"
            fill="url(#pinFill)"
            stroke="#2e6da4"
            strokeWidth="3"
          />
          <circle cy="-86" r="13" fill="#fff" stroke="#2e6c97" strokeWidth="2" />
        </g>
      ))}
    </svg>
  );
}

const navButton =
  "h-[38px] rounded border border-[#007bff] px-[13px] text-[15px] leading-6 text-[#007bff] hover:bg-[#007bff] hover:text-white";
const radio =
  "size-[13px] appearance-none rounded-full border border-[#5a5a5a] bg-white checked:bg-[#333] checked:shadow-[inset_0_0_0_2px_#fff] disabled:border-[#cfcfcf]";
const cardButton = "border-r border-[#6c757d] px-2 last:border-r-0 hover:bg-[#6c757d] hover:text-white";

const genres = ["Rock", "Pop", "Rap", "Electronic"];

const events = [
  { id: 1, genre: "rock", date: "30/05/2030 at 21:30", price: 5 },
  { id: 2, genre: "rap", date: "30/07/2030 at 23:00", price: 5 },
  { id: 3, genre: "electronic", date: "31/05/2032 at 22:00", price: 15 },
  { id: 4, genre: "pop", date: "06/10/2030 at 21:30", price: 9 },
];

function Heart() {
  return (
    <svg viewBox="0 0 16 16" className="size-4 fill-current" aria-hidden="true">
      <path d="m8 2.748-.717-.737C5.6.281 2.514.878 1.4 3.053c-.523 1.023-.641 2.5.314 4.385.92 1.815 2.834 3.989 6.286 6.357 3.452-2.368 5.365-4.542 6.286-6.357.955-1.886.838-3.362.314-4.385C13.486.878 10.4.28 8.717 2.01L8 2.748zM8 15C-7.333 4.868 3.279-3.04 7.824 1.143c.06.055.119.112.176.171a3.12 3.12 0 0 1 .176-.17C12.72-3.042 23.333 4.867 8 15z" />
    </svg>
  );
}

function EventCard({ id, genre, date, price }: (typeof events)[number]) {
  return (
    <article className="rounded border border-[#dfdfdf] bg-white p-5 shadow-[0_2px_4px_rgba(0,0,0,0.075)]">
      <h2 className="mb-1 text-[19px] leading-[26px]">{"Evento " + id}</h2>
      <p className="mb-1.5 leading-5 text-[#6c757d]">
        {genre}
        <br />
        {date}
      </p>
      <p className="mb-4 leading-6">{"Descrizione evento " + id + "..."}</p>
      <div className="flex h-[31px] w-fit overflow-hidden rounded-[3px] border border-[#6c757d] text-[13px] leading-5 text-[#6c757d]">
        <button className={cardButton}>Show More</button>
        <button className={cardButton}>{"Price: " + price + "€"}</button>
        <button className={cardButton}>Show on map</button>
        <button className={cardButton} aria-label="Add to favourites">
          <Heart />
        </button>
      </div>
    </article>
  );
}

export default function App() {
  return (
    <div className="min-h-screen bg-white font-['Open_Sans',sans-serif] text-[15px] leading-6 text-[#212529]">
      <div className="mx-auto max-w-[1140px] px-[15px]">
        <header className="flex items-center justify-between pt-6">
          <span>Welcome, test@test.it</span>
          <nav className="flex gap-1">
            <button className={navButton}>Add new</button>
            <button className={navButton}>My Events</button>
            <button className={navButton}>Log out</button>
          </nav>
        </header>

        <main>
          <div className="pt-[76px] pb-[62px] text-center">
            <h1 className="mb-[9px] text-[52px] leading-[66px] font-semibold">Events Finder</h1>
            <p className="text-[19px] leading-7 font-light">A simple events finder for your life</p>
          </div>

          <form className="flex flex-col items-center" onSubmit={(e) => e.preventDefault()}>
            <input
              type="text"
              aria-label="Search events"
              placeholder="Type..."
              className="h-12 w-full rounded border border-[#ced4da] px-4 pt-1 text-[19px] placeholder:text-[#6c757d]"
            />
            <button className="mt-2 h-[51px] w-[189px] rounded bg-[#007bff] text-[19px] text-white">Search</button>
            <div className="mt-px flex items-center gap-1">
              <span>Search by genre:</span>
              {genres.map((g) => (
                <a key={g} href="#" className="h-5 rounded bg-[#007bff] px-1.5 text-[11px] leading-[21px] font-bold text-white">
                  {g}
                </a>
              ))}
            </div>
            <label htmlFor="range">Range in map:</label>
            <input
              id="range"
              type="range"
              min="0"
              max="100"
              defaultValue="50"
              className="mt-[3px] h-4 w-full appearance-none bg-transparent [&::-webkit-slider-runnable-track]:h-2 [&::-webkit-slider-runnable-track]:rounded-full [&::-webkit-slider-runnable-track]:bg-[#dee2e6] [&::-webkit-slider-thumb]:-mt-1 [&::-webkit-slider-thumb]:size-4 [&::-webkit-slider-thumb]:appearance-none [&::-webkit-slider-thumb]:rounded-full [&::-webkit-slider-thumb]:bg-[#007bff]"
            />
            <fieldset className="mt-[9px] flex items-center gap-[21px]">
              <span>Search in map by:</span>
              <label className="flex items-center gap-1.5">
                <input type="radio" name="where" className={radio} />
                My position
              </label>
              <label className="flex items-center gap-1.5">
                <input type="radio" name="where" disabled className={radio} />
                Selected position
              </label>
              <label className="flex items-center gap-1.5">
                <input type="radio" name="where" defaultChecked className={radio} />
                Everywhere
              </label>
            </fieldset>
          </form>

          <section className="relative mt-10 overflow-hidden rounded-[10px]">
            <MapDrawing />
            <div className="absolute top-2.5 left-2.5 flex flex-col overflow-hidden rounded border-2 border-black/20 bg-white bg-clip-padding font-['DejaVu_Sans_Mono',monospace] text-[22px] leading-[30px] font-bold text-black">
              <button className="h-[31px] w-[30px] border-b border-[#ccc]" aria-label="Zoom in">
                +
              </button>
              <button className="size-[30px]" aria-label="Zoom out">
                −
              </button>
            </div>
            <p className="absolute right-0 bottom-0 bg-white/70 px-[5px] font-['Liberation_Sans',sans-serif] text-[11px] leading-4 text-[#333]">
              <a href="#" className="text-[#0078a8]">Leaflet</a> | Map data © <a href="#" className="text-[#0078a8]">OpenStreetMap</a> contributors,{" "}
              <a href="#" className="text-[#0078a8]">CC-BY-SA</a>, Imagery © <a href="#" className="text-[#0078a8]">Mapbox</a>
            </p>
          </section>

          <section className="mt-12 grid grid-cols-3 gap-x-[30px] gap-y-10">
            {events.map((e) => (
              <EventCard key={e.id} {...e} />
            ))}
          </section>
        </main>

        <footer className="pt-[122px] pb-10 text-center text-[#6c757d]">
          Events finder - A project for Web Development course at UniCatt
        </footer>
      </div>
    </div>
  );
}
